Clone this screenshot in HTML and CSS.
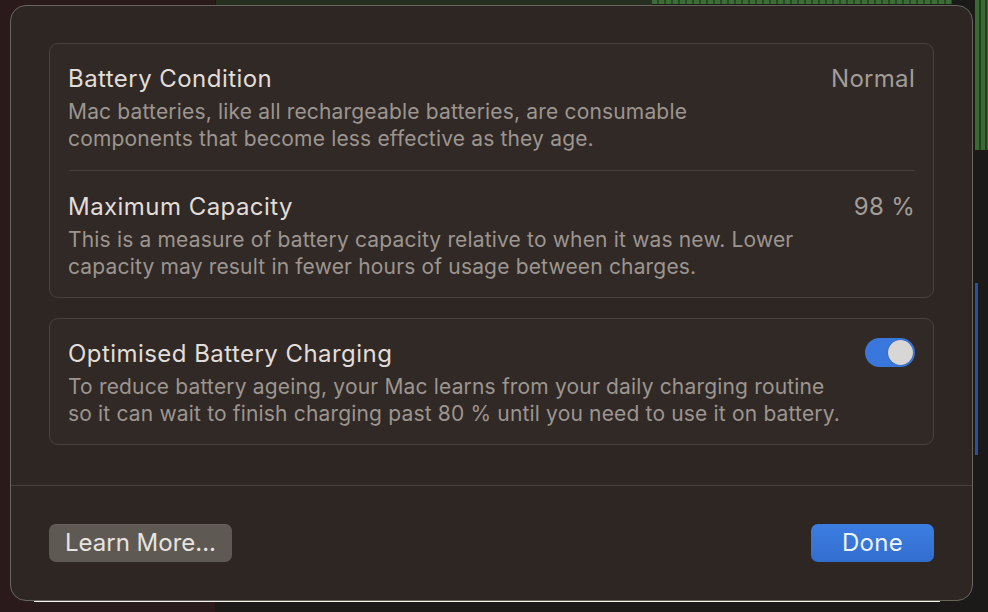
FILE: index.html
```html
<!DOCTYPE html>
<html lang="en">
<head>
<meta charset="utf-8">
<title>Battery Health</title>
<link rel="stylesheet" href="styles.css">
</head>
<body>
<div class="screen">
  <div class="sheet">
    <div class="content">
      <section class="group">
        <div class="row">
          <div class="text">
            <div class="title">Battery Condition</div>
            <div class="desc">Mac batteries, like all rechargeable batteries, are consumable<br>components that become less effective as they age.</div>
          </div>
          <div class="value">Normal</div>
        </div>
        <div class="sep"></div>
        <div class="row row-second">
          <div class="text">
            <div class="title">Maximum Capacity</div>
            <div class="desc">This is a measure of battery capacity relative to when it was new. Lower<br>capacity may result in fewer hours of usage between charges.</div>
          </div>
          <div class="value">98 %</div>
        </div>
      </section>
      <section class="group">
        <div class="row row-last">
          <div class="text">
            <div class="title">Optimised Battery Charging</div>
            <div class="desc">To reduce battery ageing, your Mac learns from your daily charging routine<br>so it can wait to finish charging past 80 % until you need to use it on battery.</div>
          </div>
          <div class="toggle"><span class="knob"></span></div>
        </div>
      </section>
    </div>
    <div class="footer">
      <button class="btn btn-secondary">Learn More...</button>
      <button class="btn btn-primary">Done</button>
    </div>
  </div>
</div>
</body>
</html>
```

FILE: styles.css
```css
html, body {
  margin: 0;
  padding: 0;
}

body {
  width: 988px;
  height: 612px;
  overflow: hidden;
  font-family: Inter, "Noto Sans", "DejaVu Sans", sans-serif;
  background-color: #1b1a19;
  background-image:
    linear-gradient(to right, #2b1a1c 0, #2b1a1c 215px, transparent 215px),
    repeating-linear-gradient(to right, #3b6e34 0, #3b6e34 5px, #2a4a25 5px, #2a4a25 7px);
  background-size: 988px 612px, 300px 4px;
  background-position: 0 0, 652px 0;
  background-repeat: no-repeat;
}

.screen {
  width: 988px;
  height: 612px;
  box-sizing: border-box;
  padding: 5px 15px 11px 10px;
  background-image:
    linear-gradient(#f2f2f2, #f2f2f2),
    linear-gradient(to bottom, #263021 0, #263021 5px, transparent 5px),
    repeating-linear-gradient(to right, #386a31 0, #386a31 4px, #253f22 4px, #253f22 6px),
    linear-gradient(#2a4fa0, #2a4fa0);
  background-size: 906px 1px, 436px 5px, 13px 150px, 3px 172px;
  background-position: 34px 601px, 216px 0, 975px 0, 975px 283px;
  background-repeat: no-repeat;
}

.sheet {
  width: 963px;
  height: 596px;
  box-sizing: border-box;
  display: flex;
  flex-direction: column;
  background: #2d2622;
  border: 1px solid #6a645f;
  border-radius: 16px;
  color: #dfdad6;
}

.content {
  display: flex;
  flex-direction: column;
  gap: 20px;
  padding: 37px 38px 40px 38px;
  border-bottom: 1px solid #48413d;
}

.group {
  background: #302925;
  border: 1px solid #48413d;
  border-radius: 9px;
}

.row {
  display: flex;
  justify-content: space-between;
  align-items: flex-start;
  padding: 22px 18px 18px 18px;
}

.row-second {
  padding-top: 23px;
  padding-bottom: 17px;
}

.row-last {
  padding-bottom: 17px;
}

.sep {
  height: 1px;
  margin: 0 18px 0 19px;
  background: #453e3a;
}

.title {
  font-size: 24px;
  line-height: 26px;
  color: #e2ddd9;
  letter-spacing: 0.45px;
}

.desc {
  margin-top: 6px;
  font-size: 21px;
  line-height: 27px;
  color: #9d9590;
  letter-spacing: 0.17px;
  white-space: nowrap;
}

.value {
  font-size: 24px;
  line-height: 26px;
  color: #a39c97;
  letter-spacing: 0.3px;
}

.toggle {
  width: 50px;
  height: 29px;
  margin-top: -3px;
  box-sizing: border-box;
  border-radius: 15px;
  background: #3a77dc;
  display: flex;
  justify-content: flex-end;
  align-items: center;
  padding-right: 2px;
}

.knob {
  width: 25px;
  height: 25px;
  border-radius: 50%;
  background: #d9d7d5;
  box-shadow: 0 0 1px rgba(0, 0, 0, 0.4);
}

.footer {
  display: flex;
  justify-content: space-between;
  align-items: center;
  padding: 38px 38px 38px 38px;
}

.btn {
  height: 38px;
  border: none;
  border-radius: 7px;
  font-family: Inter, "Noto Sans", "DejaVu Sans", sans-serif;
  font-size: 24px;
  line-height: 38px;
  padding: 0 12px;
  margin: 0;
}

.btn-secondary {
  width: 183px;
  background: #5f5954;
  color: #e8e4e0;
  box-shadow: inset 0 1px 0 rgba(255, 255, 255, 0.06);
}

.btn-primary {
  width: 123px;
  background: linear-gradient(#3c7de2, #326ecf);
  color: #eef3fb;
  letter-spacing: 0.3px;
}
```
